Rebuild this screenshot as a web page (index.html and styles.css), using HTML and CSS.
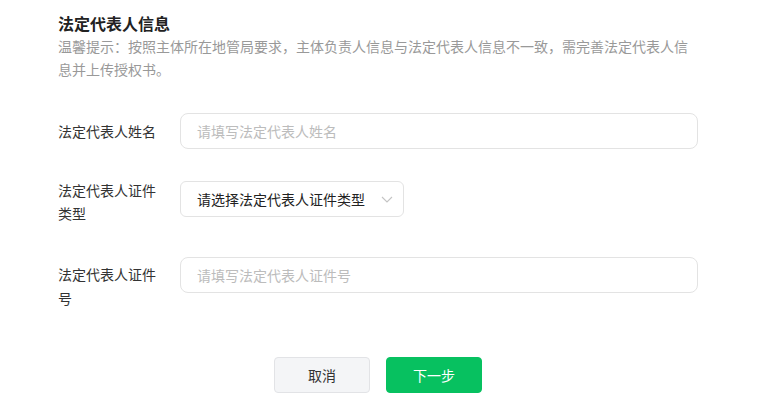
FILE: index.html
```html
<!DOCTYPE html>
<html lang="zh-CN">
<head>
<meta charset="utf-8">
<link rel="stylesheet" href="styles.css">
</head>
<body>
<div class="page">
  <h2 class="title">法定代表人信息</h2>
  <p class="tip">温馨提示：按照主体所在地管局要求，主体负责人信息与法定代表人信息不一致，需完善法定代表人信息并上传授权书。</p>
  <form class="form">
    <div class="row row-center">
      <label class="label">法定代表人姓名</label>
      <input class="input" type="text" placeholder="请填写法定代表人姓名">
    </div>
    <div class="row row-select">
      <label class="label label-select">法定代表人证件类型</label>
      <div class="select">
        <span class="select-text">请选择法定代表人证件类型</span>
        <svg class="chevron" width="12" height="7" viewBox="0 0 12 7"><path d="M1 1 L6 6 L11 1" fill="none" stroke="#c4c4c4" stroke-width="1.1"/></svg>
      </div>
    </div>
    <div class="row row-id">
      <label class="label label-id">法定代表人证件号</label>
      <input class="input" type="text" placeholder="请填写法定代表人证件号">
    </div>
    <div class="actions">
      <button type="button" class="btn btn-cancel">取消</button>
      <button type="button" class="btn btn-next">下一步</button>
    </div>
  </form>
</div>
</body>
</html>
```

FILE: styles.css
```css
* { box-sizing: border-box; }
body {
  margin: 0;
  background: #fff;
  font-family: "Noto Sans CJK SC", "Noto Sans", sans-serif;
  color: #333;
}
.page {
  width: 640px;
  margin-left: 58px;
  padding-top: 11px;
}
.title {
  margin: 0;
  font-size: 16px;
  line-height: 24px;
  font-weight: 700;
  color: #222;
}
.tip {
  margin: 0;
  font-size: 14px;
  line-height: 23px;
  color: #999;
}
.form {
  margin-top: 32px;
}
.row {
  display: flex;
  align-items: flex-start;
}
.row-center { align-items: center; }
.row-select { margin-top: 32px; }
.row-id { margin-top: 32px; }
.label {
  width: 110px;
  margin-right: 12px;
  font-size: 14px;
  line-height: 23px;
  color: #333;
  flex: none;
}
.label-select { margin-top: -2px; }
.label-id { margin-top: 5px; line-height: 24px; }
.input {
  flex: 1;
  height: 36px;
  border: 1px solid #e3e3e3;
  border-radius: 8px;
  padding: 0 16px;
  font-family: inherit;
  font-size: 14px;
  color: #333;
  outline: none;
}
.input::placeholder { color: #bcbcbc; }
.select {
  width: 224px;
  height: 36px;
  border: 1px solid #e3e3e3;
  border-radius: 6px;
  padding: 0 10px 0 16px;
  display: flex;
  align-items: center;
  justify-content: space-between;
}
.select-text {
  font-size: 14px;
  color: #222;
}
.chevron { display: block; margin-top: 1px; }
.actions {
  margin-top: 47px;
  display: flex;
  justify-content: center;
  gap: 16px;
}
.btn {
  width: 96px;
  height: 36px;
  border-radius: 4px;
  font-family: inherit;
  font-size: 14px;
  cursor: pointer;
}
.btn-cancel {
  background: #f4f5f7;
  border: 1px solid #e2e3e6;
  color: #333;
}
.btn-next {
  background: #07c160;
  border: 1px solid #07c160;
  color: #fff;
}
```
